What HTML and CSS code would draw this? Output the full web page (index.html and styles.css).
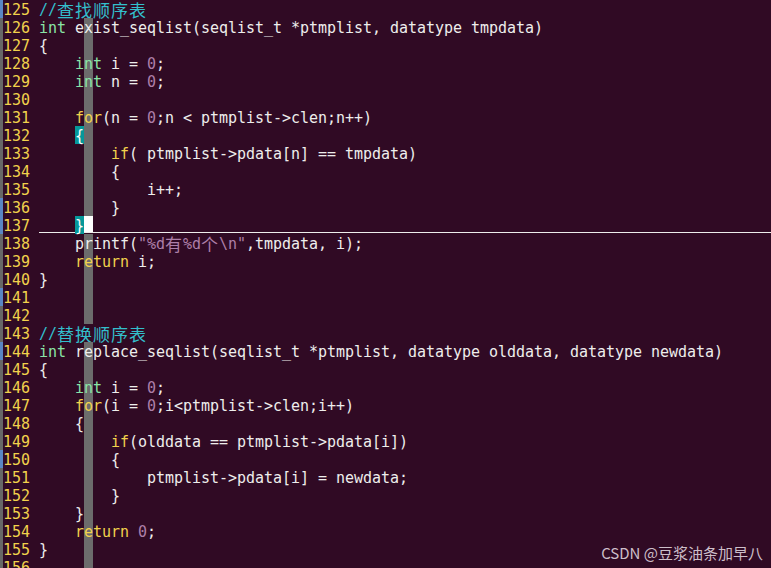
FILE: index.html
```html
<!DOCTYPE html>
<html lang="zh">
<head>
<meta charset="utf-8">
<title>vim</title>
<link rel="stylesheet" href="styles.css">
</head>
<body>
<div class="term">
<div class="r"><i class="s b"></i><span class="n">125</span><span class="c"><span class="cm">//<span class="w">查</span><span class="w">找</span><span class="w">顺</span><span class="w">序</span><span class="w">表</span></span></span></div>
<div class="r"><i class="s g"></i><span class="n">126</span><span class="c"><span class="ty">int</span> e<span class="cc">x</span>ist_seqlist(seqlist_t *ptmplist, datatype tmpdata)</span></div>
<div class="r"><i class="s g"></i><span class="n">127</span><span class="c">{    <span class="cc"> </span></span></div>
<div class="r"><i class="s g"></i><span class="n">128</span><span class="c">    <span class="ty">i<span class="cc">n</span>t</span> i = <span class="ct">0</span>;</span></div>
<div class="r"><i class="s g"></i><span class="n">129</span><span class="c">    <span class="ty">i<span class="cc">n</span>t</span> n = <span class="ct">0</span>;</span></div>
<div class="r"><i class="s g"></i><span class="n">130</span><span class="c">     <span class="cc"> </span></span></div>
<div class="r"><i class="s g"></i><span class="n">131</span><span class="c">    <span class="kw">f<span class="cc">o</span>r</span>(n = <span class="ct">0</span>;n &lt; ptmplist-&gt;clen;n++)</span></div>
<div class="r"><i class="s g"></i><span class="n">132</span><span class="c">    <span class="mp">{</span><span class="cc"> </span></span></div>
<div class="r"><i class="s g"></i><span class="n">133</span><span class="c">     <span class="cc"> </span>  <span class="kw">if</span>( ptmplist-&gt;pdata[n] == tmpdata)</span></div>
<div class="r"><i class="s g"></i><span class="n">134</span><span class="c">     <span class="cc"> </span>  {</span></div>
<div class="r"><i class="s g"></i><span class="n">135</span><span class="c">     <span class="cc"> </span>      i++;</span></div>
<div class="r"><i class="s b"></i><span class="n">136</span><span class="c">     <span class="cc"> </span>  }</span></div>
<div class="r"><i class="s b"></i><span class="n">137</span><span class="c cl">    <span class="mp">}</span><span class="cu"> </span></span></div>
<div class="r"><i class="s g"></i><span class="n">138</span><span class="c">    p<span class="cc">r</span>intf(<span class="st">"%d<span class="w">有</span>%d<span class="w">个</span>\n"</span>,tmpdata, i);</span></div>
<div class="r"><i class="s g"></i><span class="n">139</span><span class="c">    <span class="kw">r<span class="cc">e</span>turn</span> i;</span></div>
<div class="r"><i class="s g"></i><span class="n">140</span><span class="c">}    <span class="cc"> </span></span></div>
<div class="r"><i class="s b"></i><span class="n">141</span><span class="c">     <span class="cc"> </span></span></div>
<div class="r"><i class="s g"></i><span class="n">142</span><span class="c">     <span class="cc"> </span></span></div>
<div class="r"><i class="s g"></i><span class="n">143</span><span class="c"><span class="cm">//<span class="w">替</span><span class="w">换</span><span class="w">顺</span><span class="w">序</span><span class="w">表</span></span></span></div>
<div class="r"><i class="s b"></i><span class="n">144</span><span class="c"><span class="ty">int</span> r<span class="cc">e</span>place_seqlist(seqlist_t *ptmplist, datatype olddata, datatype newdata)</span></div>
<div class="r"><i class="s g"></i><span class="n">145</span><span class="c">{    <span class="cc"> </span></span></div>
<div class="r"><i class="s g"></i><span class="n">146</span><span class="c">    <span class="ty">i<span class="cc">n</span>t</span> i = <span class="ct">0</span>;</span></div>
<div class="r"><i class="s g"></i><span class="n">147</span><span class="c">    <span class="kw">f<span class="cc">o</span>r</span>(i = <span class="ct">0</span>;i&lt;ptmplist-&gt;clen;i++)</span></div>
<div class="r"><i class="s g"></i><span class="n">148</span><span class="c">    {<span class="cc"> </span></span></div>
<div class="r"><i class="s g"></i><span class="n">149</span><span class="c">     <span class="cc"> </span>  <span class="kw">if</span>(olddata == ptmplist-&gt;pdata[i])</span></div>
<div class="r"><i class="s b"></i><span class="n">150</span><span class="c">     <span class="cc"> </span>  {</span></div>
<div class="r"><i class="s g"></i><span class="n">151</span><span class="c">     <span class="cc"> </span>      ptmplist-&gt;pdata[i] = newdata;</span></div>
<div class="r"><i class="s g"></i><span class="n">152</span><span class="c">     <span class="cc"> </span>  }</span></div>
<div class="r"><i class="s g"></i><span class="n">153</span><span class="c">    }<span class="cc"> </span></span></div>
<div class="r"><i class="s g"></i><span class="n">154</span><span class="c">    <span class="kw">r<span class="cc">e</span>turn</span> <span class="ct">0</span>;</span></div>
<div class="r"><i class="s g"></i><span class="n">155</span><span class="c">}    <span class="cc"> </span></span></div>
<div class="r"><i class="s g"></i><span class="n">156</span><span class="c">     <span class="cc"> </span></span></div>
</div>
<div class="mark">CSDN @豆浆油条加早八</div>
</body>
</html>
```
FILE: styles.css
```css
html, body {
  margin: 0;
  padding: 0;
  background: #300a24;
  overflow: hidden;
  height: 568px;
}

.term {
  font-family: "DejaVu Sans Mono", "Liberation Mono", "Noto Sans CJK SC", monospace;
  font-size: 15px;
  letter-spacing: -0.03px;
  line-height: 20px;
  color: #eeeeec;
}

.r {
  display: flex;
  height: 18px;
}

.s {
  display: block;
  width: 3px;
  flex: 0 0 3px;
  height: 18px;
}
.s.g { background: #676767; }
.s.b { background: #5a86c4; }

.n {
  flex: 0 0 36px;
  width: 36px;
  height: 18px;
  box-sizing: border-box;
  padding-right: 9px;
  text-align: right;
  color: #f2d24c;
  white-space: pre;
}

.c {
  flex: 1;
  height: 18px;
  white-space: pre;
}

.c.cl {
  background: linear-gradient(#eeeeec, #eeeeec) left 16px / 100% 1px no-repeat;
}

.cc, .cu, .mp {
  display: inline-block;
  height: 18px;
  vertical-align: top;
  line-height: 20px;
}
.cc { background: #6c6c6c; }
.cu { background: #ffffff; height: 16px; }
.mp { background: #06989a; color: #ffffff; }

.w {
  display: inline-block;
  width: 18px;
  height: 18px;
  vertical-align: top;
  line-height: 20px;
  font-family: "Noto Sans CJK SC", sans-serif;
  font-size: 17px;
  letter-spacing: 0;
  text-align: left;
}

.ty { color: #8ae4a6; }
.kw { color: #f2d24c; }
.cm { color: #33bfcc; }
.ct { color: #ad7fa8; }
.st { color: #ad7fa8; }

.mark {
  position: absolute;
  right: 8px;
  bottom: 7px;
  font-family: "Noto Sans CJK SC", "Noto Sans", sans-serif;
  font-size: 15px;
  line-height: 16px;
  color: #cdbfc9;
}
```
